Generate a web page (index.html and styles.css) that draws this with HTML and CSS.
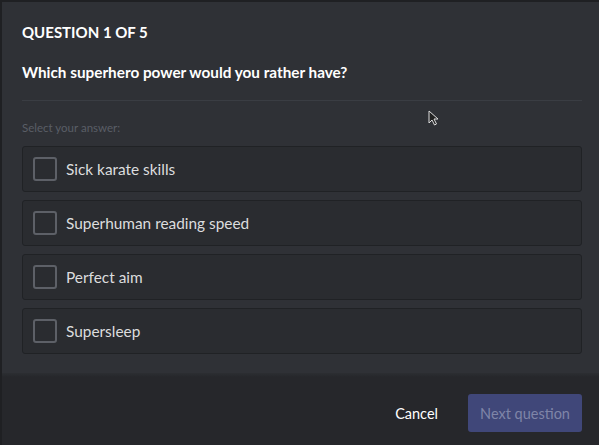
FILE: index.html
```html
<!DOCTYPE html>
<html>

<head>
    <link rel="stylesheet" href="styles.css">
    <title>Question</title>
</head>

<body>
    <div class="modal">
        <div class="modal-body">
            <h2 class="step">Question 1 of 5</h2>
            <h3 class="question">Which superhero power would you rather have?</h3>
            <div class="divider"></div>
            <div class="hint">Select your answer:</div>

            <div class="answers">
                <label class="answer"><span class="box"></span>Sick karate skills</label>
                <label class="answer"><span class="box"></span>Superhuman reading speed</label>
                <label class="answer"><span class="box"></span>Perfect aim</label>
                <label class="answer"><span class="box"></span>Supersleep</label>
            </div>
        </div>

        <div class="modal-footer">
            <button type="button" class="cancel">Cancel</button>
            <button type="button" class="next" disabled>Next question</button>
        </div>
    </div>

    <!-- mouse pointer from the capture -->
    <svg class="cursor" width="12" height="17" viewBox="0 0 12 17">
        <path d="M1 1 L1 13 L4 10 L6.5 15 L8.5 14 L6 9 L10 9 Z" fill="#222" stroke="#ddd" stroke-width="1"/>
    </svg>
</body>

</html>
```

FILE: styles.css
```css
body {
    margin: 0;
    padding: 2px 0 0 2px;
    width: 599px;
    height: 445px;
    box-sizing: border-box;
    overflow: hidden;
    background-color: #1f2023;
    font-family: Lato, "Noto Sans", sans-serif;
    position: relative;
}

.modal {
    width: 597px;
    height: 443px;
    background-color: #2f3136;
    display: flex;
    flex-direction: column;
}

.modal-body {
    flex: 1;
    padding: 0 17px 0 20px;
}

.step {
    margin: 20px 0 0;
    font-size: 15px;
    line-height: 20px;
    font-weight: 700;
    text-transform: uppercase;
    color: #fff;
}

.question {
    margin: 20px 0 0;
    font-size: 15.3px;
    line-height: 20px;
    font-weight: 700;
    color: #fff;
}

.divider {
    height: 1px;
    background-color: #3a3d43;
    margin-top: 18px;
}

.hint {
    margin-top: 20px;
    font-size: 11.5px;
    line-height: 14px;
    color: #5a5e66;
}

.answers {
    margin-top: 11px;
    display: flex;
    flex-direction: column;
    gap: 8px;
}

.answer {
    height: 46px;
    box-sizing: border-box;
    display: flex;
    align-items: center;
    gap: 9px;
    padding-left: 10px;
    background-color: #2a2c30;
    border: 1px solid #202225;
    border-radius: 3px;
    font-size: 15.4px;
    color: #dcddde;
}

.box {
    width: 20px;
    height: 20px;
    border: 2px solid #5d6067;
    border-radius: 3px;
}

.modal-footer {
    height: 72px;
    box-sizing: border-box;
    display: flex;
    justify-content: flex-end;
    align-items: flex-start;
    gap: 6px;
    padding: 21px 17px 0 0;
    background: linear-gradient(#2c2e32 0, #26272b 4px, #26272b 100%);
}

.modal-footer button {
    font-family: Lato, "Noto Sans", sans-serif;
    font-size: 14.5px;
    border: none;
    border-radius: 3px;
    height: 38px;
}

.cancel {
    background: none;
    color: #fff;
    padding: 0 24px;
}

.next {
    width: 114px;
    background-color: #404779;
    color: #7f85a8;
}

.cursor {
    position: absolute;
    left: 428px;
    top: 110px;
}
```
